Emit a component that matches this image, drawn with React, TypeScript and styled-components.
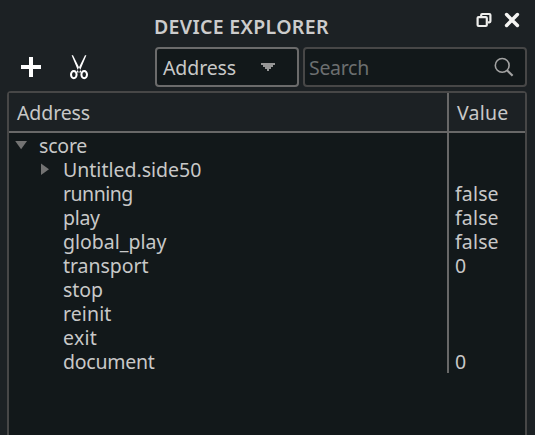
import React from "react";
import styled, { createGlobalStyle } from "styled-components";

const GlobalStyle = createGlobalStyle`
  * { box-sizing: border-box; }
  html, body { margin: 0; height: 100%; background: #1c2124; overflow: hidden; }
  body { font-family: "Noto Sans", "Open Sans", sans-serif; font-size: 19.5px; color: #c8c8c8; }
`;

const Dock = styled.main`
  display: flex;
  flex-direction: column;
  width: 535px;
  height: 435px;
  padding: 0 8px 0 7px;
  background: #1c2124;
  overflow: hidden;
`;

const TitleBar = styled.header`
  display: flex;
  justify-content: space-between;
  height: 47px;
  padding: 12px 7px 0 147px;
`;

const Title = styled.h1`
  margin: 0;
  font-size: 19.5px;
  font-weight: 600;
  line-height: 30px;
  letter-spacing: 0.32px;
  white-space: nowrap;
  color: #cccccc;
`;

const IconButton = styled.button`
  display: flex;
  padding: 0;
  border: 0;
  background: none;
`;

const WindowButtons = styled.div`
  display: flex;
  gap: 12px;
`;

const Toolbar = styled.div`
  display: flex;
  gap: 4px;
  height: 40px;
  margin-bottom: 4px;
`;

const Actions = styled.div`
  display: flex;
  align-items: center;
  gap: 27px;
  width: 144px;
  padding-left: 13px;
`;

const Field = styled.div<{ $width: number; $border: string }>`
  display: flex;
  align-items: center;
  justify-content: space-between;
  width: ${(p) => p.$width}px;
  border: 2px solid ${(p) => p.$border};
  border-radius: 4px;
  background: #12181a;
`;

const Filter = styled(Field)`
  padding: 0 22px 0 6px;
`;

const Search = styled(Field)`
  padding: 0 11px 0 4px;
  color: #6c6f70;
`;

const Text = styled.span<{ $tracking?: number }>`
  line-height: 22px;
  letter-spacing: ${(p) => p.$tracking ?? 0}px;
  white-space: nowrap;
`;

const FieldText = styled(Text)`
  padding-top: 2px;
`;

const Tree = styled.section`
  flex: 1;
  border: 2px solid #474747;
  border-bottom: 0;
  border-radius: 4px 4px 0 0;
  background: #12181a;
`;

const HeaderRow = styled.div`
  display: grid;
  grid-template-columns: 440px 1fr;
  height: 40px;
  border-bottom: 2px solid #686868;
  background: #1c2124;
`;

const HeaderCell = styled.div`
  display: flex;
  align-items: center;
  padding: 2px 0 0 8px;

  &:first-child {
    border-right: 2px solid #686868;
  }
`;

const Row = styled.div`
  display: grid;
  grid-template-columns: 440px 1fr;
  height: 24px;
`;

const NameCell = styled.div<{ $level: number }>`
  display: flex;
  align-items: center;
  padding-top: 2px;
  padding-left: ${(p) => 6 + p.$level * 24}px;
  border-right: 2px solid #686868;
`;

const Branch = styled.span`
  display: flex;
  flex: 0 0 24px;
`;

const ValueCell = styled.div`
  display: flex;
  align-items: center;
  padding-top: 2px;
  padding-left: 6px;
`;

type Item = { name: string; level: number; tracking: number; value?: string; branch?: "open" | "closed" };

const items: Item[] = [
  { name: "score", level: 0, tracking: -0.2, branch: "open" },
  { name: "Untitled.side50", level: 1, tracking: 0, branch: "closed" },
  { name: "running", level: 1, tracking: -0.5, value: "false" },
  { name: "play", level: 1, tracking: -0.3, value: "false" },
  { name: "global_play", level: 1, tracking: 0, value: "false" },
  { name: "transport", level: 1, tracking: -0.05, value: "0" },
  { name: "stop", level: 1, tracking: -0.1 },
  { name: "reinit", level: 1, tracking: 0.1 },
  { name: "exit", level: 1, tracking: 0.3 },
  { name: "document", level: 1, tracking: -0.25, value: "0" },
];

const FloatIcon = () => (
  <svg width="16" height="16" viewBox="0 0 16 16" fill="none" stroke="#eeeeec" strokeWidth="2.2" strokeLinejoin="round">
    <path d="M5.2 4V3Q5.2 2 6.2 2H13.4Q14.4 2 14.4 3V9.3Q14.4 10.3 13.4 10.3H12" />
    <rect x="1.6" y="5.1" width="9.2" height="8.9" rx="1" />
  </svg>
);

const CloseIcon = () => (
  <svg width="16" height="16" viewBox="0 0 16 16" stroke="#f4f4f2" strokeWidth="3.5" strokeLinecap="round">
    <path d="M2.6 2.6L13.4 13.4M13.4 2.6L2.6 13.4" />
  </svg>
);

const PlusIcon = () => (
  <svg width="22" height="22" viewBox="0 0 22 22" fill="#fff">
    <path d="M9 1h4v8h8v4h-8v8H9v-8H1V9h8z" />
  </svg>
);

const ScissorsIcon = () => (
  <svg width="20" height="26" viewBox="0 0 20 26" fill="none" stroke="#fff">
    <path d="M2.6 1.2H4L10.4 14L12.5 18.5L9.8 18.5Z M17.4 1.2H16L9.6 14L7.5 18.5L10.2 18.5Z" fill="#fff" stroke="none" />
    <ellipse cx="4.8" cy="20.6" rx="2.8" ry="3.6" strokeWidth="2" />
    <ellipse cx="15.2" cy="20.6" rx="2.8" ry="3.6" strokeWidth="2" />
  </svg>
);

const ComboArrow = () => (
  <svg width="14" height="8" viewBox="0 0 14 8" fill="#969696" shapeRendering="crispEdges">
    <path d="M0 0H14V2H12V4H10V6H8V8H6V6H4V4H2V2H0Z" />
  </svg>
);

const SearchIcon = () => (
  <svg width="20" height="20" viewBox="0 0 20 20" fill="none" stroke="#a2a2a2">
    <circle cx="8.2" cy="8.4" r="6.9" strokeWidth="1.6" />
    <path d="M13 13.2L18.6 18.8" strokeWidth="2.2" />
  </svg>
);

const BranchArrow = ({ open }: { open: boolean }) => (
  <svg width="14" height="14" viewBox="0 0 14 14" fill="#737373">
    <path d={open ? "M0.2 2H12L6.1 10.2Z" : "M2 0.4V12L10 6.2Z"} />
  </svg>
);

export default function App() {
  return (
    <>
      <GlobalStyle />
      <Dock>
        <TitleBar>
          <Title>DEVICE EXPLORER</Title>
          <WindowButtons>
            <IconButton aria-label="Float"><FloatIcon /></IconButton>
            <IconButton aria-label="Close"><CloseIcon /></IconButton>
          </WindowButtons>
        </TitleBar>
        <Toolbar>
          <Actions>
            <IconButton aria-label="Add"><PlusIcon /></IconButton>
            <IconButton aria-label="Cut"><ScissorsIcon /></IconButton>
          </Actions>
          <Filter $width={144} $border="#6b6b6b">
            <FieldText $tracking={-0.1}>Address</FieldText>
            <ComboArrow />
          </Filter>
          <Search $width={224} $border="#474747">
            <FieldText $tracking={-0.3}>Search</FieldText>
            <SearchIcon />
          </Search>
        </Toolbar>
        <Tree>
          <HeaderRow>
            <HeaderCell><Text $tracking={-0.1}>Address</Text></HeaderCell>
            <HeaderCell><Text $tracking={0.2}>Value</Text></HeaderCell>
          </HeaderRow>
          {items.map((item) => (
            <Row key={item.name}>
              <NameCell $level={item.level}>
                <Branch>{item.branch && <BranchArrow open={item.branch === "open"} />}</Branch>
                <Text $tracking={item.tracking}>{item.name}</Text>
              </NameCell>
              <ValueCell><Text $tracking={0.15}>{item.value}</Text></ValueCell>
            </Row>
          ))}
        </Tree>
      </Dock>
    </>
  );
}
